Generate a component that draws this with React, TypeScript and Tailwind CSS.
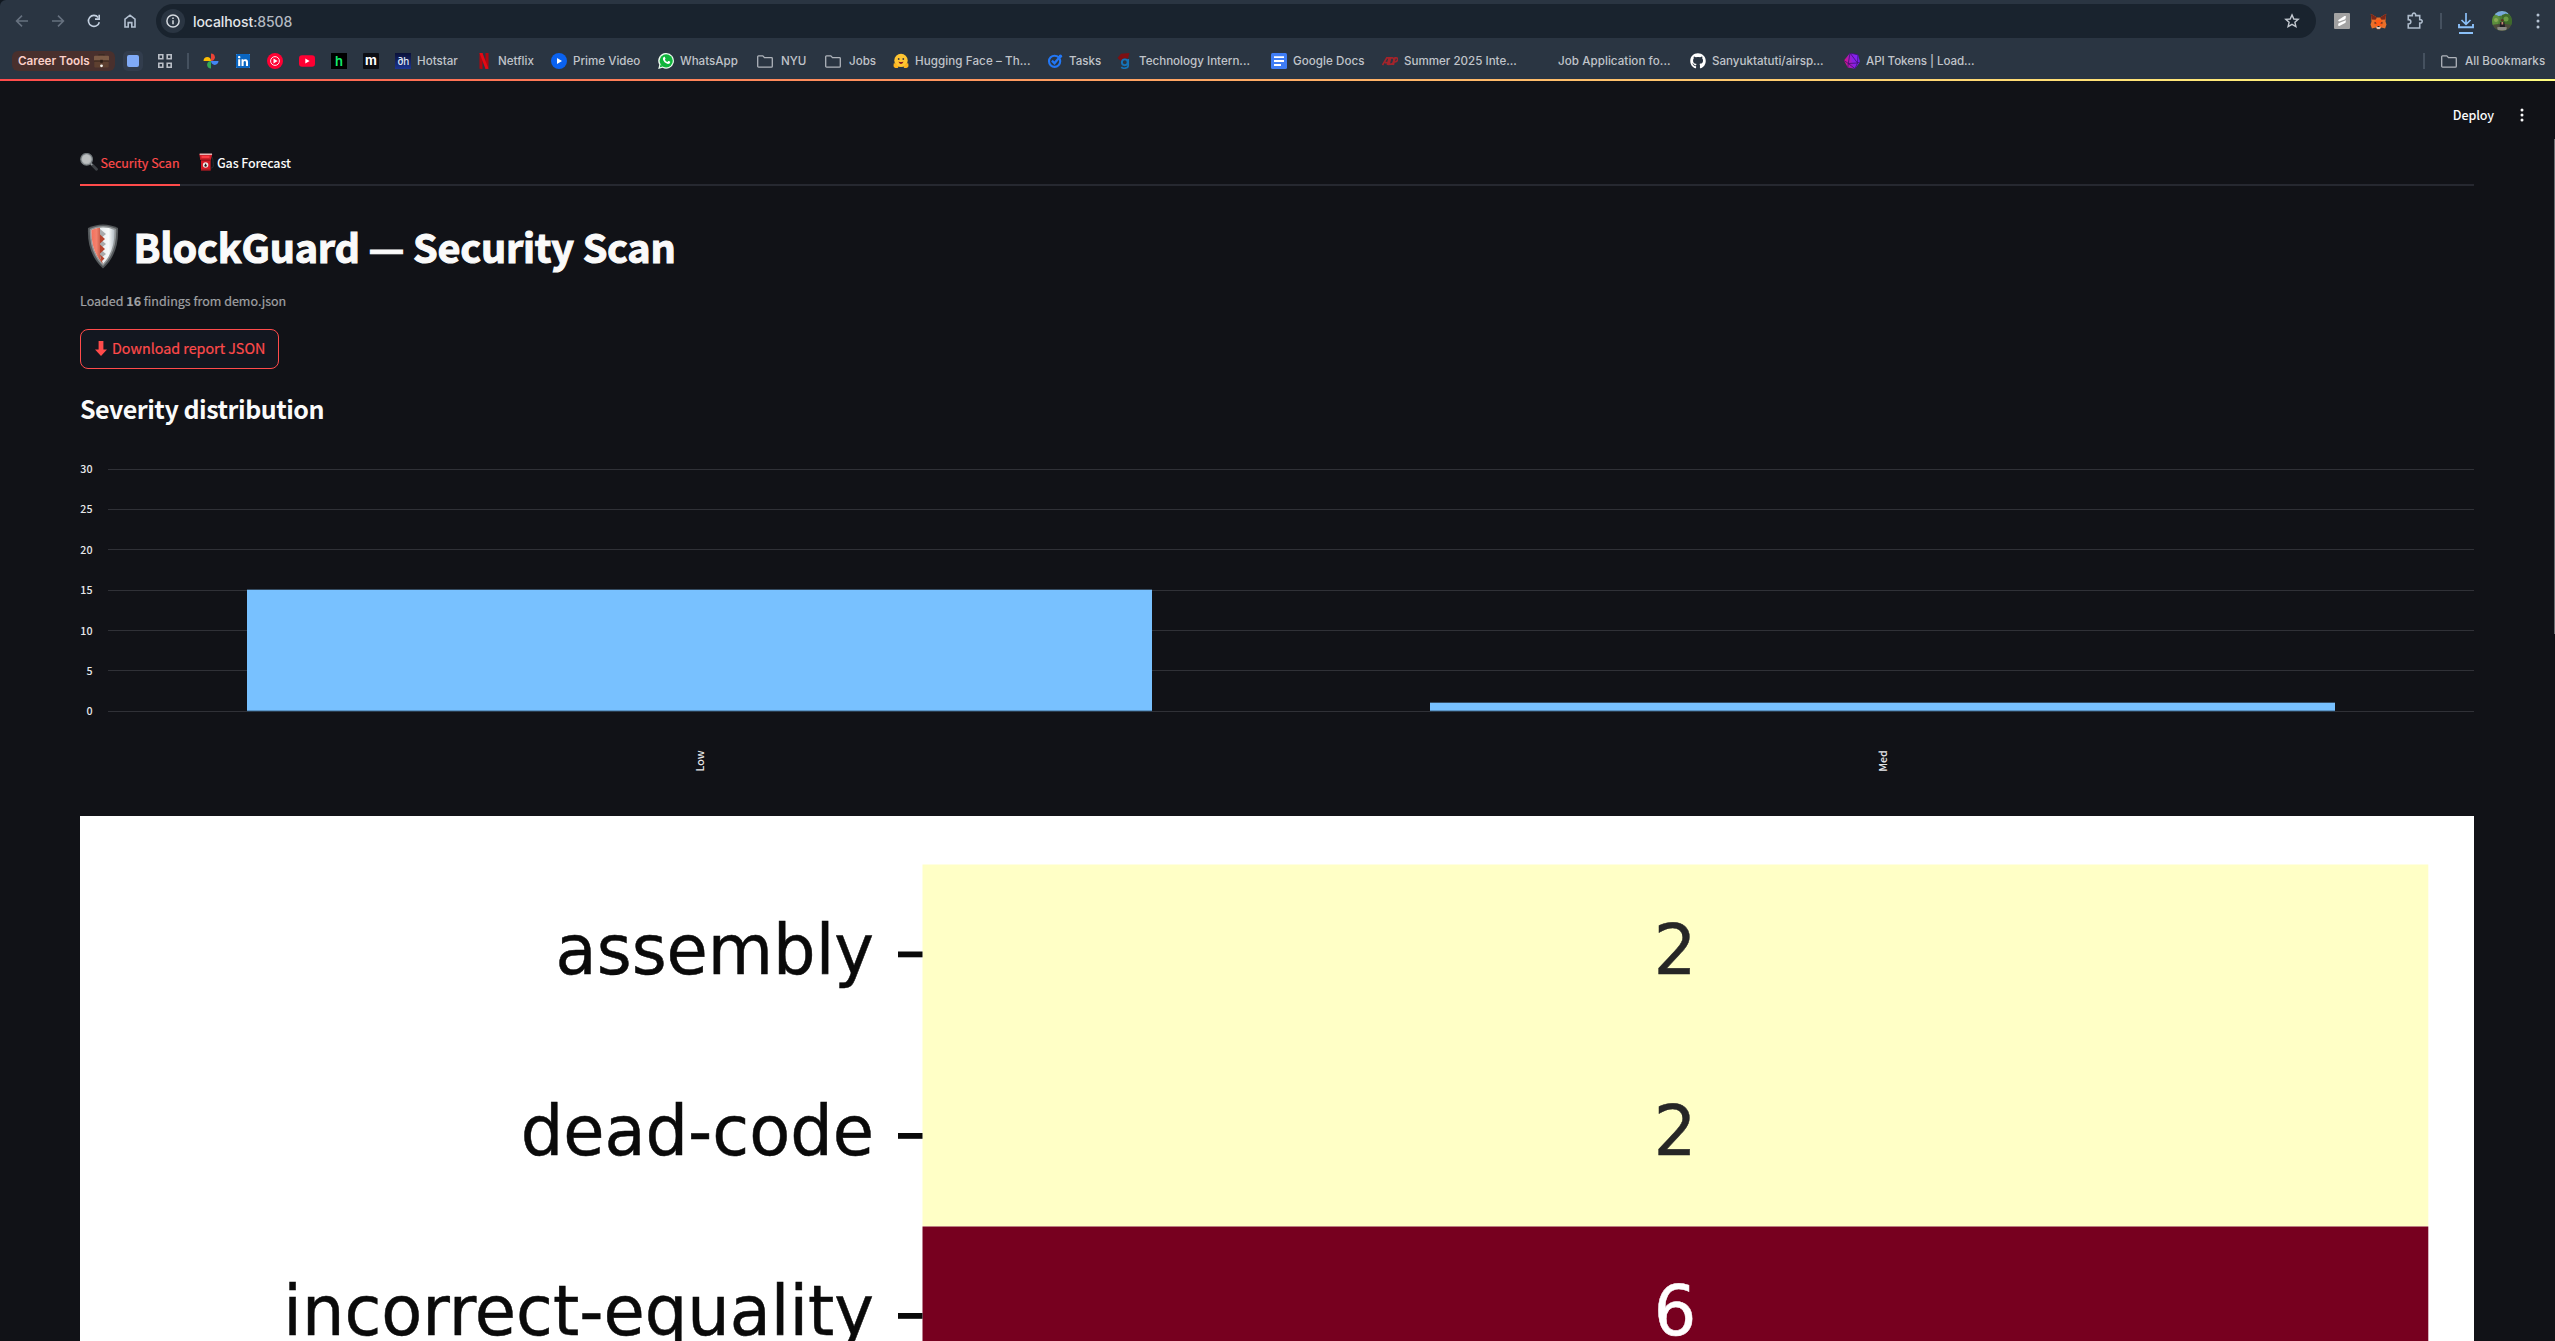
import type { ReactNode } from "react";
import { FaGithub, FaLinkedin } from "react-icons/fa";

const SANS = "font-['Noto_Sans_CJK_SC',sans-serif]";

/* ---------- toolbar icons ---------- */

function Stroke({ size = 16, color, w = 1.6, children }: { size?: number; color: string; w?: number; children: ReactNode }) {
  return (
    <svg width={size} height={size} viewBox="0 0 16 16" fill="none" stroke={color} strokeWidth={w} className="block flex-none">
      {children}
    </svg>
  );
}

const Back = () => (
  <Stroke color="#66717f">
    <path d="M14 8H3M8 2.6 2.6 8 8 13.4" />
  </Stroke>
);
const Forward = () => (
  <Stroke color="#66717f">
    <path d="M2 8h11M8 2.6 13.4 8 8 13.4" />
  </Stroke>
);
const Reload = () => (
  <Stroke color="#c3d0e0">
    <path d="M13.3 9.2A5.5 5.5 0 1 1 12.2 4.4" />
    <path d="M13.2 1.8v4.3H9" />
  </Stroke>
);
const Home = () => (
  <Stroke color="#b3c0d0">
    <path d="M3 14V6.2L8 2.2l5 4V14H9.8V9.6H6.2V14z" />
  </Stroke>
);
const Info = () => (
  <Stroke color="#d5dae0" size={16} w={1.5}>
    <circle cx="8" cy="8" r="6.1" />
    <path d="M8 7.2v4M8 4.6v1.5" />
  </Stroke>
);
const Star = () => (
  <Stroke color="#c3c9d0" w={1.4}>
    <path d="M8 1.9 9.8 6l4.4.4-3.3 2.9 1 4.3L8 11.3l-3.9 2.3 1-4.3L1.8 6.4 6.2 6z" />
  </Stroke>
);
const Puzzle = () => (
  <Stroke color="#aebccc" size={18} w={1.4}>
    <path d="M2 3.2h3.6C5.4 1.6 6.2 1 7.1 1s1.7.6 1.5 2.2h3.6v3.6c1.6-.2 2.2.6 2.2 1.5s-.6 1.7-2.2 1.5v4.400H2v-3.600c1.800 0 2.300-.9 2.300-1.900S3.800 6.800 2 6.800z" />
  </Stroke>
);
const Download = () => (
  <svg width="16" height="22" viewBox="0 0 16 22" fill="none" stroke="#8bc0f8" strokeWidth="2" className="block">
    <path d="M8 0v11M3.500 7 8 11.300 12.500 7" strokeWidth="1.700" />
    <path d="M1 11v3.200h14V11" strokeWidth="1.900" />
    <path d="M1 20h14" />
  </svg>
);
const Dots = ({ color, gap = 5 }: { color: string; gap?: number }) => (
  <svg width="4" height="16" viewBox="0 0 4 16" fill={color} className="block">
    <circle cx="2" cy={8 - gap} r="1.500" />
    <circle cx="2" cy="8" r="1.500" />
    <circle cx="2" cy={8 + gap} r="1.500" />
  </svg>
);
const Folder = () => (
  <svg width="16" height="13" viewBox="0 0 16 13" fill="none" stroke="#aeb3ba" strokeWidth="1.300" className="block flex-none">
    <path d="M1.500.900h4.300l1.700 1.800h7c.4 0 .8.4.8.8v7.700c0 .5-.4.900-.9.900H1.600c-.5 0-.9-.4-.9-.9V1.700c0-.5.3-.8.8-.8z" />
  </svg>
);
const Metamask = () => (
  <svg width="17" height="17" viewBox="0 0 17 17" className="block">
    <path d="M.8.8 7 4.500h3L16.200.800l-.7 7.700 1 3-1.400 4-3.800-1-1.600 1.700H7.300l-1.600-1.700-3.800 1-1.400-4 1-3z" fill="#e8702a" />
    <path d="M.8.8 7 4.500 5.600 6.800l-4-.2zM16.200.8 10 4.500l1.400 2.300 4-.2z" fill="#79281a" />
    <path d="M5.600 6.800h5.800l1.600 4.500-2.100 2H6.100l-2.100-2z" fill="#ff5c16" />
    <path d="m4.600 8.800 2.200 1.500-2.200.4zM12.400 8.800l-2.200 1.500 2.200.4z" fill="#3b2a27" />
    <path d="M6.800 13.200h3.400l.3 1.900-1 .9h-2l-1-.9z" fill="#d4cbc6" />
    <path d="M7.400 13h2.200v1H7.400z" fill="#2b2020" />
  </svg>
);
const GrayApp = () => (
  <svg width="16" height="16" viewBox="0 0 16 16" className="block">
    <rect width="16" height="16" rx="1" fill="#a2a2a2" />
    <path d="M4 7.200 10.500 3l1.600.2-.8 3L5 8.600zM4.600 10.200 12 7.300 11.500 9.800 5.400 13l-1.500-.4z" fill="#fff" />
  </svg>
);
const Avatar = () => (
  <svg width="20" height="20" viewBox="0 0 20 20" className="block">
    <defs>
      <clipPath id="avatarClip">
        <circle cx="10" cy="10" r="10" />
      </clipPath>
    </defs>
    <g clipPath="url(#avatarClip)">
      <rect width="20" height="20" fill="#4c7a35" />
      <path d="M2 0h15l-1 3-6 1.500-6 1z" fill="#78a9dc" />
      <path d="M0 5l5-1 3 3-2 6-6 1z" fill="#5d8f3d" />
      <path d="M10 4l4-1.500 6 4v8l-7 1-3-5z" fill="#3f6b2b" />
      <circle cx="14" cy="8" r="2.500" fill="#6c9c45" />
      <circle cx="4" cy="9" r="2" fill="#8aa955" />
      <path d="M0 14l7-1h7l6 1v6H0z" fill="#4d4a3c" />
      <path d="M5 16.500c3-1.500 7-1.500 10 0l-1 3H6z" fill="#8a8a84" />
      <circle cx="10.300" cy="9.300" r="1.300" fill="#5a3525" />
      <path d="M8.300 11h4l.8 5H7.500z" fill="#231f24" />
      <path d="M9.500 11h1.700v2.500H9.500z" fill="#c98a74" />
    </g>
  </svg>
);

/* ---------- bookmark favicons ---------- */

const Photos = () => (
  <svg width="16" height="16" viewBox="0 0 16 16" className="block">
    <path d="M8 .500c2.300 0 3.900 1.700 3.900 3.800S10.300 8 8 8z" fill="#ea4335" />
    <path d="M15.500 8c0 2.300-1.700 3.900-3.800 3.900S8 10.300 8 8z" fill="#4285f4" />
    <path d="M8 15.500c-2.300 0-3.900-1.700-3.900-3.800S5.700 8 8 8z" fill="#34a853" />
    <path d="M.500 8c0-2.300 1.700-3.900 3.800-3.900S8 5.700 8 8z" fill="#fbbc04" />
  </svg>
);
const LinkedIn = () => (
  <span className="flex h-[14px] w-[14px] items-center justify-center bg-white">
    <FaLinkedin size={16} color="#0a66c2" className="flex-none" />
  </span>
);
const YtMusic = () => (
  <svg width="16" height="16" viewBox="0 0 16 16" className="block">
    <circle cx="8" cy="8" r="8" fill="#ff0033" />
    <circle cx="8" cy="8" r="4.400" fill="none" stroke="#fff" strokeWidth=".9" />
    <path d="M6.500 5.500 10.600 8l-4.100 2.500z" fill="#fff" />
  </svg>
);
const YouTube = () => (
  <svg width="16" height="16" viewBox="0 0 16 16" className="block">
    <rect y="2.200" width="16" height="11.600" rx="3" fill="#ff0033" />
    <path d="M6.300 5.500 10.600 8l-4.300 2.500z" fill="#fff" />
  </svg>
);
const LetterH = () => (
  <span className="flex h-4 w-4 items-center justify-center bg-black font-[Inter] text-[13px] leading-none font-semibold text-[#13ec6c]">h</span>
);
const LetterM = () => (
  <span className="flex h-4 w-4 items-center justify-center rounded-[1px] bg-[#0c0e14] pb-[2px] font-[Inter] text-[13px] leading-none font-bold text-white">m</span>
);
const Hotstar = () => (
  <span className="flex h-4 w-4 items-center justify-center bg-linear-to-b from-[#0b1138] to-[#1c3593] font-[Inter] text-[10px] leading-none font-medium tracking-[-0.5px] text-[#dfe5f5]">
    ∂h
  </span>
);
const Netflix = () => (
  <svg width="16" height="16" viewBox="0 0 16 16" className="block">
    <path d="M3.500 0h3v16l-3-.2zM9.500 0h3v15.800l-3 .2z" fill="#b1060f" />
    <path d="M3.500 0h3l6 15.800-3 .2z" fill="#e50914" />
  </svg>
);
const Prime = () => (
  <svg width="16" height="16" viewBox="0 0 16 16" className="block">
    <circle cx="8" cy="8" r="8" fill="#0a62f0" />
    <path d="M6 5 11 8l-5 3z" fill="#fff" />
  </svg>
);
const WhatsApp = () => (
  <svg width="16" height="16" viewBox="0 0 16 16" className="block">
    <path d="M8.200 0a7.800 7.800 0 1 1-3.700 14.700L.2 15.900l1.100-4.200A7.800 7.800 0 0 1 8.200 0z" fill="#eefbf0" />
    <circle cx="8.200" cy="7.800" r="6.600" fill="#10b53c" />
    <path d="m1.800 14.300.8-3 2.200 2.200z" fill="#10b53c" />
    <path d="M5.900 4c.4-.3.800-.2 1 .2l.6 1.400c.1.300-.5.900-.6 1.100.5 1.100 1.400 1.900 2.500 2.400l.9-1c.3-.2 1.700.5 1.900.7.2.5-.3 1.700-1.200 2-2.800.6-6-2.500-6.100-5C4.900 5 5.400 4.300 5.900 4z" fill="#fff" />
  </svg>
);
const HuggingFace = () => (
  <svg width="16" height="16" viewBox="0 0 16 16" className="block">
    <circle cx="8" cy="7.400" r="6.700" fill="#ffc532" />
    <path d="M.700 10.500c1-.6 3 .2 4.200 2.600l.3 1.700c-1.700.6-4 .1-4.700-1.600zM15.300 10.500c-1-.6-3 .2-4.200 2.600l-.3 1.700c1.700.6 4 .1 4.700-1.600z" fill="#ffb41f" />
    <circle cx="5.700" cy="6" r=".9" fill="#3a3b45" />
    <circle cx="10.300" cy="6" r=".9" fill="#3a3b45" />
    <path d="M5.600 8.400c1.500.9 3.300.9 4.800 0-.2 1.600-1.200 2.500-2.400 2.500S5.800 10 5.600 8.400z" fill="#8b1f22" />
  </svg>
);
const Tasks = () => (
  <svg width="16" height="16" viewBox="0 0 16 16" fill="none" className="block">
    <circle cx="7.600" cy="8.300" r="5.600" stroke="#2277f5" strokeWidth="2.100" />
    <path d="m4.900 7.600 2.600 2.600 5.600-6.700" stroke="#2277f5" strokeWidth="2.300" />
    <circle cx="13.400" cy="3.300" r="1.700" fill="#2277f5" />
  </svg>
);
const TechG = () => (
  <svg width="16" height="16" viewBox="0 0 16 16" fill="none" className="block">
    <path d="M.500 5 4 .8 12.500 0 11 5.500 7 5.300 3.800 8z" fill="#7d1013" />
    <circle cx="7.800" cy="9.300" r="2.900" stroke="#1673b8" strokeWidth="1.900" />
    <path d="M11.200 6v6.500c0 3.300-5.800 3.400-6.800 1.300" stroke="#1673b8" strokeWidth="1.700" />
  </svg>
);
const Docs = () => (
  <svg width="16" height="16" viewBox="0 0 16 16" className="block">
    <rect width="16" height="16" rx="1.500" fill="#3f7df5" />
    <path d="M3 3.200h10v1.900H3zM3 7h10v1.900H3zM3 11h7v1.900H3z" fill="#fff" />
  </svg>
);
const Adp = () => (
  <svg width="16" height="16" viewBox="0 0 16 16" fill="none" stroke="#a3242b" strokeWidth="1.700" className="block">
    <path d="M.500 12 4.800 4.800h2.400L5.400 12M3 9.600h3.500M7 11.300 8.600 4.800h1.800c2.600 0 1.300 6.400-1.300 6.400zM11.300 12 13 4.800h1.300c2.400 0 1.400 4.200-1.400 4.200h-.7" />
  </svg>
);
const Gem = () => (
  <svg width="16" height="16" viewBox="0 0 16 16" className="block">
    <defs>
      <linearGradient id="gem" x1="0" x2="1" y1=".6" y2=".4">
        <stop offset="0" stopColor="#e0127c" />
        <stop offset=".55" stopColor="#8a1fe0" />
        <stop offset="1" stopColor="#7a25ff" />
      </linearGradient>
    </defs>
    <path d="M6 0 14 1.800 16 9l-5 6.700-7.200-1.300L0 7.500z" fill="url(#gem)" />
    <path d="M6 0 4.300 10.500l9.200-.5L6 0m8 1.800L13.500 10 11 15.700 4.300 10.500 0 7.500M4.300 10.500 3.800 14.400M13.500 10 16 9M6 0l8 1.800" stroke="#3d1070" strokeWidth=".8" fill="none" />
  </svg>
);

type Bookmark = { label: string; icon: ReactNode; box: string; text?: string };

const BOOKMARKS: Bookmark[] = [
  { label: "", icon: <Photos />, box: "w-8" },
  { label: "", icon: <LinkedIn />, box: "w-8" },
  { label: "", icon: <YtMusic />, box: "w-8" },
  { label: "", icon: <YouTube />, box: "w-8" },
  { label: "", icon: <LetterH />, box: "w-8" },
  { label: "", icon: <LetterM />, box: "w-8" },
  { label: "Hotstar", icon: <Hotstar />, box: "w-[81px]" },
  { label: "Netflix", icon: <Netflix />, box: "w-[75px]" },
  { label: "Prime Video", icon: <Prime />, box: "w-[107px]" },
  { label: "WhatsApp", icon: <WhatsApp />, box: "w-[99px]" },
  { label: "NYU", icon: <Folder />, box: "w-[68px]", text: "ml-[2px]" },
  { label: "Jobs", icon: <Folder />, box: "w-[68px]", text: "ml-[2px]" },
  { label: "Hugging Face – Th...", icon: <HuggingFace />, box: "w-[154px]", text: "tracking-[0.080px]" },
  { label: "Tasks", icon: <Tasks />, box: "w-[70px]" },
  { label: "Technology Intern...", icon: <TechG />, box: "w-[154px]" },
  { label: "Google Docs", icon: <Docs />, box: "w-[111px]", text: "tracking-[0.060px]" },
  { label: "Summer 2025 Inte...", icon: <Adp />, box: "w-[154px]" },
  { label: "Job Application fo...", icon: null, box: "w-[154px]", text: "tracking-[0.060px]" },
  { label: "Sanyuktatuti/airsp...", icon: <FaGithub size={16} color="#fff" />, box: "w-[154px]" },
  { label: "API Tokens | Load...", icon: <Gem />, box: "w-[140px]", text: "tracking-[-0.080px]" },
];

function BrowserChrome() {
  return (
    <div className="flex h-[79px] flex-none flex-col rounded-tl-[6px] bg-[#2a3542] font-[Inter,sans-serif]">
      <div className="flex h-[42px] items-center">
        <div className="flex w-[156px] flex-none items-center gap-5 pl-[14px]">
          <Back />
          <Forward />
          <Reload />
          <Home />
        </div>
        <div className="flex h-[34px] w-[2160px] flex-none items-center rounded-full bg-[#19232e] pr-4 pl-[5px]">
          <span className="flex h-6 w-6 items-center justify-center rounded-full bg-[#2a3542]">
            <Info />
          </span>
          <span className="ml-2 text-[14px] font-medium tracking-[-0.080px] text-[#e3e6ea]">
            localhost<span className="text-[#b4bac2]">:8508</span>
          </span>
          <span className="ml-auto">
            <Star />
          </span>
        </div>
        <div className="flex flex-none items-center pl-[18px]">
          <span className="w-9"><GrayApp /></span>
          <span className="w-9"><Metamask /></span>
          <span className="w-[34px]"><Puzzle /></span>
          <span className="h-4 w-[2px] bg-[#45515f]" />
          <span className="w-[50px] pt-[6px] pl-4"><Download /></span>
          <span className="w-[44px]"><Avatar /></span>
          <Dots color="#b5c3d3" gap={6} />
        </div>
      </div>
      <div className="flex h-[37px] items-center pt-px text-[11.600px] leading-4 font-medium text-[#c0c4ca]">
        <div className="ml-3 flex h-5 w-[103px] flex-none items-center gap-1 rounded-[6px] bg-[#49302d] pl-[6px] font-semibold text-[#fbcfc8]">
          <span className="w-[72px] text-[11.700px] whitespace-nowrap">Career Tools</span>
          <svg width="15" height="14" viewBox="0 0 15 14" className="block flex-none">
            <path d="M5 2V.600h5V2" fill="none" stroke="#3b2a22" strokeWidth="1.200" />
            <rect y="1.800" width="15" height="5.500" rx="1" fill="#7b5a45" />
            <rect x=".300" y="6.500" width="14.400" height="7" rx="1" fill="#5e4030" />
            <path d="M0 6.500h15v1H0z" fill="#33231b" />
            <path d="M6.200 5.800h2.600v3H6.200z" fill="#2c1d16" />
            <circle cx="7.500" cy="11.800" r="1.400" fill="#f4f2ec" />
          </svg>
        </div>
        <div className="ml-2 flex h-5 w-5 flex-none items-center justify-center rounded-[5px] bg-[#323d4d]">
          <span className="h-3 w-3 rounded-[2px] bg-[#80abf8]" />
        </div>
        <svg width="14" height="14" viewBox="0 0 14 14" fill="none" stroke="#b9bec6" strokeWidth="1.600" className="ml-[15px] block flex-none">
          <path d="M.8.800h4v4h-4zM9.200.800h4v4h-4zM.8 9.200h4v4h-4zM9.200 9.200h4v4h-4z" />
        </svg>
        <span className="mr-[14px] ml-[15px] h-4 w-[2px] flex-none bg-[#45515f]" />
        {BOOKMARKS.map((b, i) => (
          <div key={i} className={`flex flex-none items-center gap-[6px] whitespace-nowrap ${b.box}`}>
            <span className="flex w-4 flex-none items-center justify-center">{b.icon}</span>
            <span className={b.text}>{b.label}</span>
          </div>
        ))}
        <div className="ml-auto flex w-[132px] flex-none items-center whitespace-nowrap">
          <span className="mr-4 h-4 w-[2px] bg-[#45515f]" />
          <Folder />
          <span className="ml-2 tracking-[0.050px]">All Bookmarks</span>
        </div>
      </div>
    </div>
  );
}

/* ---------- page artwork ---------- */

const Magnifier = () => (
  <svg width="18" height="18" viewBox="0 0 18 18" className="block flex-none">
    <path d="m11.800 11.500 4.700 4.800" stroke="#3e4246" strokeWidth="2.800" strokeLinecap="round" />
    <path d="m10.500 10.200 1.700 1.800" stroke="#9aa0a4" strokeWidth="1.600" />
    <circle cx="6.600" cy="6.300" r="5.800" fill="#abb0b2" stroke="#73797d" strokeWidth="1.200" />
    <circle cx="6.400" cy="6" r="4.300" fill="#bcbfc0" />
  </svg>
);
const FuelPump = () => (
  <svg width="16" height="18" viewBox="0 0 16 18" className="block flex-none">
    <path d="M11.500 3c2.600.8 2.500 5 2.800 8.500.3 2.800-.9 3.500-2.300 3.500" stroke="#2b2d31" strokeWidth="1" fill="none" />
    <path d="M.300 1h13l-1.500 6H1.300z" fill="#cf1f28" />
    <path d="M.600.600h12.400v1.500H.800z" fill="#e6b4b4" />
    <path d="M2.500 2.800h8v2.100h-8z" fill="#ff3d44" />
    <path d="M2 6.500h9.600v10.700H2z" fill="#d41a24" />
    <path d="M2 6.500h9.600v1.300H2z" fill="#8f1219" />
    <circle cx="6.600" cy="12" r="2.700" fill="#ece7e4" />
    <path d="M6.600 10.200 7.800 12.500a1.200 1.200 0 1 1-2.400 0z" fill="#2a1a1c" />
    <path d="M2 16.500h9.600v1.300H2z" fill="#8a1a20" />
  </svg>
);
const Shield = () => (
  <svg width="32" height="45" viewBox="0 0 32 45" className="block flex-none">
    <defs>
      <linearGradient id="steel" x1="0" x2="1">
        <stop offset=".4" stopColor="#e9edf0" />
        <stop offset=".75" stopColor="#f7fafb" />
        <stop offset="1" stopColor="#b3bcc4" />
      </linearGradient>
      <linearGradient id="redPaint" x1="0" x2="1">
        <stop offset="0" stopColor="#f4705c" />
        <stop offset=".45" stopColor="#f3816d" />
        <stop offset="1" stopColor="#a8402c" />
      </linearGradient>
    </defs>
    <path d="M16 .5c5 0 10.500 1.200 15 3.600C31.800 21 27 34.500 16 44.500 5 34.500.2 21 1 4.100 5.500 1.700 11 .5 16 .5z" fill="#54585b" />
    <path d="M16 2c4.500 0 9.300 1 13.200 3C29.700 20.500 25.300 33 16 42 6.700 33 2.300 20.500 2.800 5 6.700 3 11.500 2 16 2z" fill="#909496" />
    <path d="M16 3.500c4 0 8 .8 11.500 2.500C28 20 24 31.500 16 39.700 8 31.500 4 20 4.500 6 8 4.300 12 3.500 16 3.500z" fill="url(#steel)" />
    <path d="M13 3.700V32l3 7.700C8 31.500 4 20 4.500 6c2.500-1.200 5-2 8.500-2.300z" fill="url(#redPaint)" />
    <path d="M13 5 19 10l-6 5zM13 15l6 5-6 5zM13 25l6 5-6 5z" fill="#a9abad" />
    <path d="M13 10.500 18 15l-5 4.500zM13 20.500l5 4.500-5 4.500zM13 30.500l4.500 4-3 3z" fill="#b8452f" />
  </svg>
);
const DownArrow = () => (
  <svg width="12" height="15" viewBox="0 0 12 15" className="block flex-none">
    <path d="M3.600 0h4.800v8.500H12L6 15 0 8.500h3.600z" fill="#ff4b4b" />
  </svg>
);

/* ---------- charts ---------- */

const TICKS = [
  { value: 30, y: 469, base: 473 },
  { value: 25, y: 509, base: 513 },
  { value: 20, y: 549, base: 554 },
  { value: 15, y: 590, base: 594 },
  { value: 10, y: 630, base: 635 },
  { value: 5, y: 670, base: 675 },
  { value: 0, y: 711, base: 715 },
];

const BARS = [
  { label: "Low", x: 247, w: 905, y: 590, cx: 704 },
  { label: "Med", x: 1430, w: 905, y: 703, cx: 1887 },
];

function SeverityChart() {
  return (
    <svg width="2394" height="366" viewBox="80 450 2394 366" className={`block ${SANS}`} fontSize="10.700" fill="#e6e7ea">
      {TICKS.map((t) => (
        <g key={t.value}>
          <rect x="108" y={t.y} width="2366" height="1" fill="#303137" />
          <text x="92.500" y={t.base} textAnchor="end" fontWeight="500">
            {t.value}
          </text>
        </g>
      ))}
      {BARS.map((b) => (
        <g key={b.label}>
          <rect x={b.x} y={b.y - 1} width={b.w} height="1" fill="#344c63" />
          <rect x={b.x} y={b.y} width={b.w} height={711 - b.y} fill="#78c1ff" />
          <rect x={b.x} y="710" width={b.w} height="1" fill="#5a94c6" />
          <rect x={b.x} y="711" width={b.w} height="1" fill="#283a4c" />
          <text transform={`translate(${b.cx} 761) rotate(-90)`} textAnchor="middle" fontWeight="500">
            {b.label}
          </text>
        </g>
      ))}
    </svg>
  );
}

const DETECTORS = [
  { name: "assembly", count: 2, base: 973.5, fill: "#262626" },
  { name: "dead-code", count: 2, base: 1155, fill: "#262626" },
  { name: "incorrect-equality", count: 6, base: 1335, fill: "#ffffff" },
];

function DetectorHeatmap() {
  return (
    <svg width="2394" height="525" viewBox="80 816 2394 525" className="block bg-white font-['DejaVu_Sans',sans-serif]" fontSize="70">
      <rect x="922.500" y="864.500" width="1505.800" height="362" fill="#ffffc6" />
      <rect x="922.500" y="1226.500" width="1505.800" height="120" fill="#77001f" />
      {DETECTORS.map((d) => (
        <g key={d.name}>
          <text transform={`translate(874 ${d.base}) scale(.958 1)`} textAnchor="end" fill="#0a0a0a" stroke="#0a0a0a" strokeWidth=".5">
            {d.name}
          </text>
          <rect x="898" y={d.base - 22} width="24.500" height="5.800" fill="#0a0a0a" />
          <text transform={`translate(1675 ${d.base}) scale(.956 1)`} textAnchor="middle" fill={d.fill} stroke={d.fill} strokeWidth=".5">
            {d.count}
          </text>
        </g>
      ))}
    </svg>
  );
}

export default function App() {
  return (
    <div className="relative flex h-[1341px] w-[2555px] flex-col overflow-hidden bg-[#111217]">
      <div className="flex-none bg-[#111820]">
        <BrowserChrome />
      </div>
      <div className="h-[2px] flex-none bg-linear-to-r from-[#ff4b4b] to-[#fffd80]" />
      <div className={`flex flex-col text-[#fafafa] ${SANS}`}>
        <header className="flex h-[68px] flex-none items-center justify-end pr-[31px]">
          <span className="text-[12.500px] leading-5 font-medium tracking-[-0.100px]">Deploy</span>
          <span className="ml-[26px]">
            <Dots color="#fafafa" gap={5} />
          </span>
        </header>
        <main className="flex flex-col px-20">
          <nav className="flex h-[37px] w-[2394px] border-b-2 border-[#262830]">
            <div className="flex h-[37px] w-[100px] flex-none gap-[2.500px] border-b-2 border-[#ff4b4b] pt-[4px] text-[#ff4b4b]">
              <Magnifier />
              <span className="text-[12.500px] leading-[20px] whitespace-nowrap [-webkit-text-stroke:0.2px]">Security Scan</span>
            </div>
            <div className="ml-[19px] flex flex-none gap-[2px] pt-[4px]">
              <FuelPump />
              <span className="text-[12.500px] leading-[20px] font-medium tracking-[-0.150px] whitespace-nowrap">Gas Forecast</span>
            </div>
          </nav>
          <h1 className="mt-[36px] flex h-[48px] items-center gap-[14.500px] pl-[7px] text-[39.600px] leading-[48px] font-bold tracking-[-0.200px] [-webkit-text-stroke:1.1px]">
            <Shield />
            <span>BlockGuard — Security Scan</span>
          </h1>
          <p className="mt-[20px] h-[21px] text-[12.500px] leading-[21px] text-[#a0a1a4] [-webkit-text-stroke:0.2px]">
            Loaded <b>16</b> findings from demo.json
          </p>
          <button className="mt-[18px] flex h-10 w-[199px] items-center gap-[5px] rounded-[8px] border border-[#ff4b4b] bg-[#131720] pb-[2px] pl-[14px] text-[14.300px] leading-5 text-[#ff4b4b] [-webkit-text-stroke:0.2px]">
            <DownArrow />
            <span className="whitespace-nowrap">Download report JSON</span>
          </button>
          <h2 className="mt-[25px] h-[28px] text-[25px] leading-[28px] font-bold tracking-[-0.480px]">Severity distribution</h2>
          <div className="mt-[28px] flex flex-col">
            <SeverityChart />
            <DetectorHeatmap />
          </div>
        </main>
      </div>
      <div className="absolute top-[139px] right-0 h-[495px] w-px bg-[#6b6c70]" />
    </div>
  );
}
